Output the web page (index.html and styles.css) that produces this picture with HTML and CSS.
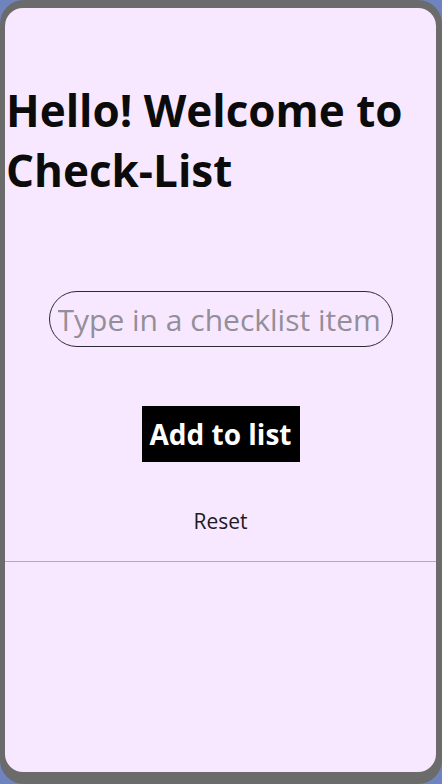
FILE: index.html
```html
<!DOCTYPE html>
<html lang="en">
<head>
  <meta charset="UTF-8" />
  <meta name="viewport" content="width=device-width, initial-scale=1.0"/>
  <title>Check-List</title>
  <link rel="stylesheet" href="styles.css">
</head>
<body>
  <div class="frame">
    <div class="card">
      <h1 class="title">Hello! Welcome to Check-List</h1>

      <div class="form">
        <input type="text" class="item-input" placeholder="Type in a checklist item" />
        <button class="add-btn">Add to list</button>
        <button class="reset-btn">Reset</button>
      </div>

      <ul class="list"></ul>
    </div>
  </div>
</body>
</html>
```

FILE: styles.css
```css
* {
  box-sizing: border-box;
}
body {
  margin: 0;
  font-family: "Open Sans", "Noto Sans", sans-serif;
  background: #6f84be;
}
.frame {
  height: 784px;
  padding: 8px 6px 12px 5px;
  background: #6b6b6b;
  border-radius: 24px;
}
.card {
  height: 100%;
  background: #f7e8ff;
  border-radius: 18px;
  display: flex;
  flex-direction: column;
  overflow: hidden;
}
.title {
  margin: 72px 0 0 1px;
  font-size: 44px;
  line-height: 60px;
  font-weight: 700;
  color: #0b0b0b;
}
.form {
  display: flex;
  flex-direction: column;
  align-items: center;
  padding-top: 91px;
  border-bottom: 1px solid #b3acb6;
}
.item-input {
  width: 344px;
  height: 56px;
  padding: 0 8px;
  border: 1px solid #2e2a33;
  border-radius: 28px;
  background: transparent;
  font-family: inherit;
  font-size: 30px;
}
.item-input::placeholder {
  color: #938f99;
}
.add-btn {
  margin-top: 59px;
  width: 158px;
  height: 56px;
  padding: 0;
  border: none;
  background: #000;
  color: #fff;
  font-family: inherit;
  font-size: 28px;
  font-weight: 700;
}
.reset-btn {
  margin: 44px 0 25px;
  border: none;
  background: none;
  color: #1e1a22;
  font-family: inherit;
  font-size: 21px;
}
.list {
  margin: 0;
  padding: 0;
}
```
